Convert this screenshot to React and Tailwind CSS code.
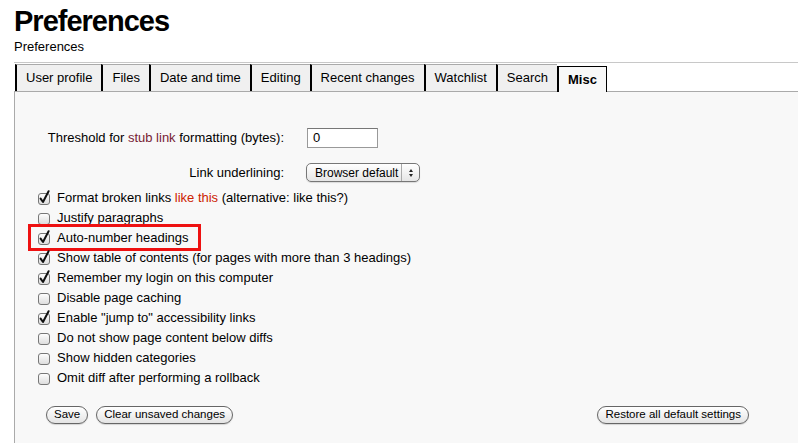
import React from 'react';

const tabs = ['User profile', 'Files', 'Date and time', 'Editing', 'Recent changes', 'Watchlist', 'Search'];

const options = [
  { label: <>Format broken links <span className='text-[#cc2200]'>like this</span> (alternative: like this?)</>, checked: true },
  { label: 'Justify paragraphs', checked: false },
  { label: 'Auto-number headings', checked: true, marked: true },
  { label: 'Show table of contents (for pages with more than 3 headings)', checked: true },
  { label: 'Remember my login on this computer', checked: true },
  { label: 'Disable page caching', checked: false },
  { label: 'Enable "jump to" accessibility links', checked: true },
  { label: 'Do not show page content below diffs', checked: false },
  { label: 'Show hidden categories', checked: false },
  { label: 'Omit diff after performing a rollback', checked: false },
];

function Checkbox({ checked }) {
  return (
    <svg width='14' height='16' viewBox='0 0 14 16' className='shrink-0'>
      <defs>
        <linearGradient id='cbg' x1='0' y1='0' x2='0' y2='1'>
          <stop offset='0' stopColor='#ffffff' />
          <stop offset='1' stopColor='#dcdcdc' />
        </linearGradient>
      </defs>
      <rect x='0.5' y='3.5' width='11' height='11' rx='2.5' fill='url(#cbg)' stroke='#777' />
      {checked && (
        <path d='M2.6 8.6 L5 12 L10.6 1.2' fill='none' stroke='#111' strokeWidth='2' strokeLinecap='round' strokeLinejoin='round' />
      )}
    </svg>
  );
}

function PillButton({ children }) {
  return (
    <button className='h-[18px] px-[7px] rounded-full border border-[#666] bg-gradient-to-b from-white to-[#e4e4e4] text-[11.5px] leading-none text-black shadow-[0_1px_1px_rgba(0,0,0,0.15)]'>
      {children}
    </button>
  );
}

export default function App() {
  return (
    <div className='min-h-[443px] bg-white pl-[14px] font-["Liberation_Sans",Arial,sans-serif] text-black overflow-hidden'>
      {/* Heading */}
      <h1 className='mt-[5px] text-[29px] leading-[32px] font-bold tracking-[-1px]'>Preferences</h1>
      <div className='mt-[2px] text-[13px] leading-[16px]'>Preferences</div>
      <div className='mt-[7px] border-b border-[#c8c8c8]' />

      {/* Tabs */}
      <div className='mt-[1px] flex items-start pl-[1px] text-[13px]'>
        {tabs.map((t) => (
          <div key={t} className='h-[27px] flex items-center px-[9px] bg-[#f0f0f0] border-t border-t-[#aaa] border-l-2 border-l-black'>
            {t}
          </div>
        ))}
        <div className='relative z-10 mt-[2px] h-[26px] flex items-center px-[9px] bg-[#f8f8f8] border border-b-0 border-black border-l-2 font-bold'>
          Misc
        </div>
      </div>

      {/* Panel */}
      <div className='-mt-px border-t border-l border-[#aaa] bg-[#f8f8f8] pl-[23px] pr-[49px] pt-[36px] pb-[30px] text-[13px]'>
        <div className='flex items-center h-[20px]'>
          <div className='w-[246px] text-right'>
            Threshold for <span className='text-[#772233]'>stub link</span> formatting (bytes):
          </div>
          <div className='ml-[23px] w-[71px] h-[20px] border border-[#999] border-t-[#777] bg-white px-[5px] flex items-center text-[13px]'>0</div>
        </div>

        <div className='mt-[15px] flex items-center h-[19px]'>
          <div className='w-[246px] text-right'>Link underlining:</div>
          <div className='ml-[22px] w-[114px] h-[19px] rounded-[5px] border border-[#777] bg-gradient-to-b from-white to-[#e6e6e6] flex items-center text-[12px] shadow-[0_1px_1px_rgba(0,0,0,0.12)]'>
            <span className='flex-1 pl-[8px]'>Browser default</span>
            <span className='w-[18px] h-full border-l border-[#aaa] flex flex-col items-center justify-center gap-[2px]'>
              <span className='w-0 h-0 border-x-[2.5px] border-x-transparent border-b-[3px] border-b-[#222]' />
              <span className='w-0 h-0 border-x-[2.5px] border-x-transparent border-t-[3px] border-t-[#222]' />
            </span>
          </div>
        </div>

        <div className='mt-[6px] flex flex-col'>
          {options.map((o, i) => (
            <div key={i} className='relative flex items-center h-[20px] gap-[5px]'>
              <Checkbox checked={o.checked} />
              <span className='whitespace-nowrap'>{o.label}</span>
              {o.marked && (
                <span className='absolute left-[-10px] top-[-4px] w-[173px] h-[27px] border-[3px] border-[#ee1111]' />
              )}
            </div>
          ))}
        </div>

        <div className='mt-[18px] flex items-center justify-between pl-[8px]'>
          <div className='flex gap-[8px]'>
            <PillButton>Save</PillButton>
            <PillButton>Clear unsaved changes</PillButton>
          </div>
          <PillButton>Restore all default settings</PillButton>
        </div>
      </div>
    </div>
  );
}
